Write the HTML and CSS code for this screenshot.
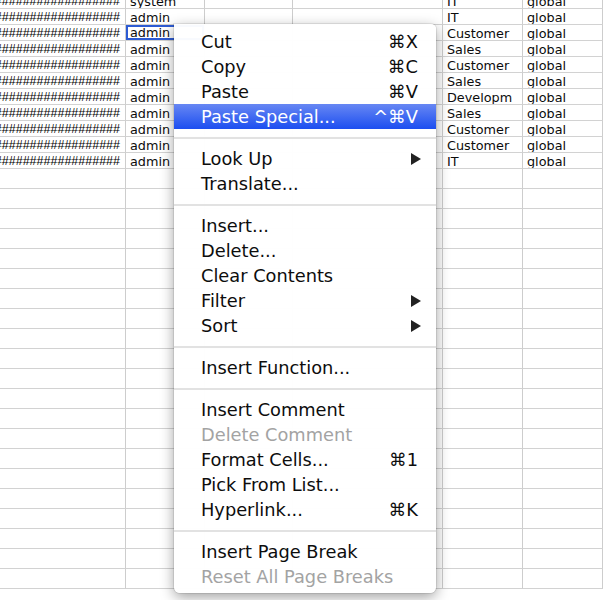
FILE: index.html
```html
<!DOCTYPE html>
<html>
<head>
<meta charset="utf-8">
<link rel="stylesheet" href="styles.css">
</head>
<body>
<div class="sheet">
  <div class="row"><div class="hash">################################</div><div>system</div><div></div><div></div><div>IT</div><div>global</div></div>
  <div class="row"><div class="hash">################################</div><div>admin</div><div></div><div></div><div>IT</div><div>global</div></div>
  <div class="row"><div class="hash">################################</div><div class="sel">admin</div><div></div><div></div><div>Customer</div><div>global</div></div>
  <div class="row"><div class="hash">################################</div><div>admin</div><div></div><div></div><div>Sales</div><div>global</div></div>
  <div class="row"><div class="hash">################################</div><div>admin</div><div></div><div></div><div>Customer</div><div>global</div></div>
  <div class="row"><div class="hash">################################</div><div>admin</div><div></div><div></div><div>Sales</div><div>global</div></div>
  <div class="row"><div class="hash">################################</div><div>admin</div><div></div><div></div><div>Developm</div><div>global</div></div>
  <div class="row"><div class="hash">################################</div><div>admin</div><div></div><div></div><div>Sales</div><div>global</div></div>
  <div class="row"><div class="hash">################################</div><div>admin</div><div></div><div></div><div>Customer</div><div>global</div></div>
  <div class="row"><div class="hash">################################</div><div>admin</div><div></div><div></div><div>Customer</div><div>global</div></div>
  <div class="row"><div class="hash">################################</div><div>admin</div><div></div><div></div><div>IT</div><div>global</div></div>
  <div class="row e"><div></div><div></div><div></div><div></div><div></div><div></div></div>
  <div class="row e"><div></div><div></div><div></div><div></div><div></div><div></div></div>
  <div class="row e"><div></div><div></div><div></div><div></div><div></div><div></div></div>
  <div class="row e"><div></div><div></div><div></div><div></div><div></div><div></div></div>
  <div class="row e"><div></div><div></div><div></div><div></div><div></div><div></div></div>
  <div class="row e"><div></div><div></div><div></div><div></div><div></div><div></div></div>
  <div class="row e"><div></div><div></div><div></div><div></div><div></div><div></div></div>
  <div class="row e"><div></div><div></div><div></div><div></div><div></div><div></div></div>
  <div class="row e"><div></div><div></div><div></div><div></div><div></div><div></div></div>
  <div class="row e"><div></div><div></div><div></div><div></div><div></div><div></div></div>
  <div class="row e"><div></div><div></div><div></div><div></div><div></div><div></div></div>
  <div class="row e"><div></div><div></div><div></div><div></div><div></div><div></div></div>
  <div class="row e"><div></div><div></div><div></div><div></div><div></div><div></div></div>
  <div class="row e"><div></div><div></div><div></div><div></div><div></div><div></div></div>
  <div class="row e"><div></div><div></div><div></div><div></div><div></div><div></div></div>
  <div class="row e"><div></div><div></div><div></div><div></div><div></div><div></div></div>
  <div class="row e"><div></div><div></div><div></div><div></div><div></div><div></div></div>
  <div class="row e"><div></div><div></div><div></div><div></div><div></div><div></div></div>
  <div class="row e"><div></div><div></div><div></div><div></div><div></div><div></div></div>
  <div class="row e"><div></div><div></div><div></div><div></div><div></div><div></div></div>
  <div class="row e"><div></div><div></div><div></div><div></div><div></div><div></div></div>
</div>

<div class="menu">
  <div class="item"><span>Cut</span><span class="key">⌘X</span></div>
  <div class="item"><span>Copy</span><span class="key">⌘C</span></div>
  <div class="item"><span>Paste</span><span class="key">⌘V</span></div>
  <div class="item active"><span>Paste Special...</span><span class="key">^⌘V</span></div>
  <div class="sep"></div>
  <div class="item"><span>Look Up</span><svg class="arrow" width="10" height="12" viewBox="0 0 10 12"><polygon points="0,0 10,6 0,12" /></svg></div>
  <div class="item"><span>Translate...</span></div>
  <div class="sep"></div>
  <div class="item"><span>Insert...</span></div>
  <div class="item"><span>Delete...</span></div>
  <div class="item"><span>Clear Contents</span></div>
  <div class="item"><span>Filter</span><svg class="arrow" width="10" height="12" viewBox="0 0 10 12"><polygon points="0,0 10,6 0,12" /></svg></div>
  <div class="item"><span>Sort</span><svg class="arrow" width="10" height="12" viewBox="0 0 10 12"><polygon points="0,0 10,6 0,12" /></svg></div>
  <div class="sep"></div>
  <div class="item"><span>Insert Function...</span></div>
  <div class="sep"></div>
  <div class="item"><span>Insert Comment</span></div>
  <div class="item disabled"><span>Delete Comment</span></div>
  <div class="item"><span>Format Cells...</span><span class="key">⌘1</span></div>
  <div class="item"><span>Pick From List...</span></div>
  <div class="item"><span>Hyperlink...</span><span class="key">⌘K</span></div>
  <div class="sep"></div>
  <div class="item"><span>Insert Page Break</span></div>
  <div class="item disabled"><span>Reset All Page Breaks</span></div>
</div>
</body>
</html>
```

FILE: styles.css
```css
html, body {
  margin: 0;
  padding: 0;
  background: #ffffff;
  overflow: hidden;
}

.sheet {
  margin-top: -7px;
  width: 603px;
  font-family: "DejaVu Sans", sans-serif;
  font-size: 12.8px;
  color: #0c0c0c;
}

.row {
  display: grid;
  grid-template-columns: 126px 79px 88px 150px 80px 80px;
  height: 16px;
}

.row > div {
  box-sizing: border-box;
  border-right: 1px solid #cdcdcd;
  border-bottom: 1px solid #d2d2d2;
  line-height: 17px;
  padding-left: 4px;
  white-space: nowrap;
  overflow: hidden;
}

.row.e {
  height: 20px;
}

.row > .hash {
  direction: rtl;
  text-align: right;
  padding-left: 0;
  padding-right: 5px;
  font-family: "Liberation Sans", sans-serif;
  font-size: 12.5px;
  color: #000;
}

.row > .sel {
  box-shadow: inset 0 0 0 2px #2d5bd3;
  line-height: 16px;
}

.menu {
  position: absolute;
  left: 174px;
  top: 24px;
  width: 262px;
  box-sizing: border-box;
  padding: 5px 0 4px;
  background: rgba(255, 255, 255, 0.97);
  border-radius: 0 5px 6px 6px;
  box-shadow: 0 4px 14px rgba(0, 0, 0, 0.38), 0 0 0 1px rgba(0, 0, 0, 0.08);
  font-family: "DejaVu Sans", sans-serif;
  font-size: 17.8px;
  color: #0d0d0d;
}

.item {
  display: flex;
  align-items: center;
  justify-content: space-between;
  height: 25px;
  padding: 0 18px 0 27px;
  white-space: nowrap;
}

.item.active {
  background: linear-gradient(#6787f3, #1c4ef0);
  color: #ffffff;
}

.item.disabled {
  color: #a3a3a3;
}

.key {
  text-align: right;
}

.arrow {
  fill: #222;
  margin-right: -3px;
}

.sep {
  height: 17px;
  display: flex;
  align-items: center;
}

.sep::before {
  content: "";
  display: block;
  width: 100%;
  height: 2px;
  background: #e2e2e2;
}
```
